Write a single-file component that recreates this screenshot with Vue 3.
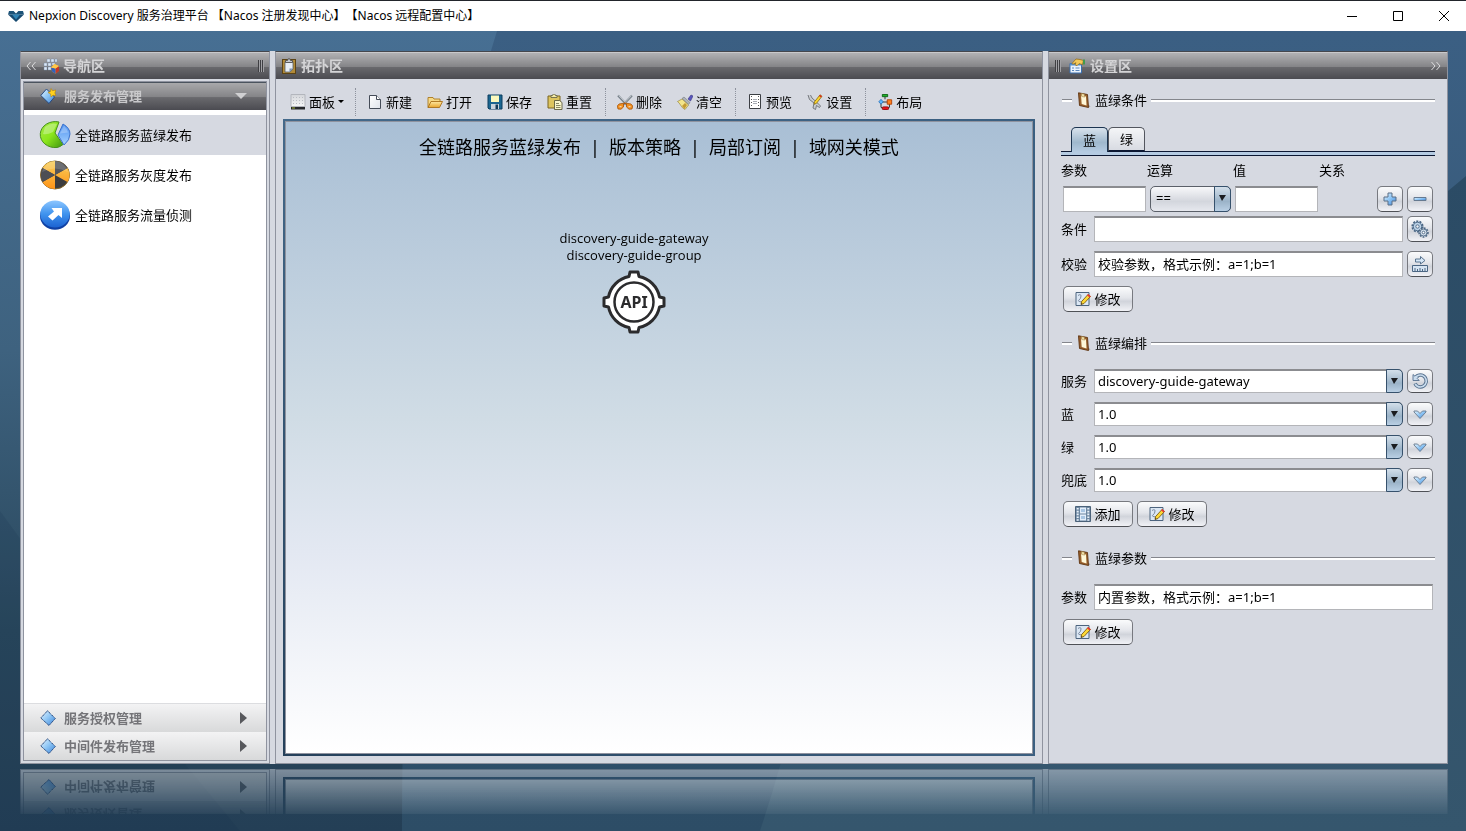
<script setup>
import { ref } from 'vue'

const toolGroups = [
  [{ icon: 'panel', text: '面板', menu: true }],
  [
    { icon: 'new', text: '新建' },
    { icon: 'open', text: '打开' },
    { icon: 'save', text: '保存' },
    { icon: 'paste', text: '重置' },
  ],
  [
    { icon: 'cut', text: '删除' },
    { icon: 'broom', text: '清空' },
  ],
  [
    { icon: 'preview', text: '预览' },
    { icon: 'tools', text: '设置' },
  ],
  [{ icon: 'layout', text: '布局' }],
]

const navItems = [
  { icon: 'pie', text: '全链路服务蓝绿发布' },
  { icon: 'hazard', text: '全链路服务灰度发布' },
  { icon: 'arrow', text: '全链路服务流量侦测' },
]
const activeNav = ref(0)
const closedGroups = ['服务授权管理', '中间件发布管理']

const heading = ['全链路服务蓝绿发布', '版本策略', '局部订阅', '域网关模式']

const tabs = ['蓝', '绿']
const activeTab = ref(0)

const checkText = ref('校验参数，格式示例：a=1;b=1')
const builtinText = ref('内置参数，格式示例：a=1;b=1')
const orchestration = [
  { id: 'service', label: '服务', value: 'discovery-guide-gateway', icon: 'refresh', tip: '刷新' },
  { id: 'blue', label: '蓝', value: '1.0', icon: 'chevron', tip: '选择蓝版本' },
  { id: 'green', label: '绿', value: '1.0', icon: 'chevron', tip: '选择绿版本' },
  { id: 'fallback', label: '兜底', value: '1.0', icon: 'chevron', tip: '选择兜底版本' },
]
</script>

<template>
  <div class="window">
    <svg class="defs" width="0" height="0" aria-hidden="true">
      <defs>
        <linearGradient id="gBlue" x1="0" y1="0" x2="1" y2="1"><stop offset="0" stop-color="#e4f5ff" /><stop offset=".5" stop-color="#8cc4f4" /><stop offset="1" stop-color="#3c82d6" /></linearGradient>
        <linearGradient id="gGreen" x1="0" y1="0" x2="1" y2="1"><stop offset="0" stop-color="#a6e94b" /><stop offset=".5" stop-color="#8be61c" /><stop offset="1" stop-color="#3f9410" /></linearGradient>
        <linearGradient id="gSlice" x1="0" y1="0" x2="0" y2="1"><stop offset="0" stop-color="#4a8ff0" /><stop offset="1" stop-color="#a6d2ff" /></linearGradient>
        <linearGradient id="gOrange" x1="0" y1="0" x2="0" y2="1"><stop offset="0" stop-color="#f7cf5c" /><stop offset="1" stop-color="#ff9417" /></linearGradient>
        <linearGradient id="gBall" x1="0" y1="0" x2="0" y2="1"><stop offset="0" stop-color="#8cc6ff" /><stop offset=".5" stop-color="#3f93ee" /><stop offset="1" stop-color="#1c63d2" /></linearGradient>
        <linearGradient id="gFolder" x1="0" y1="0" x2="0" y2="1"><stop offset="0" stop-color="#ffe9a0" /><stop offset="1" stop-color="#e8a52c" /></linearGradient>
        <linearGradient id="gPage" x1="0" y1="0" x2="1" y2="1"><stop offset="0" stop-color="#fff" /><stop offset="1" stop-color="#dfe3ea" /></linearGradient>
        <linearGradient id="gSheet" x1="0" y1="0" x2="0" y2="1"><stop offset="0" stop-color="#d3d5d9" /><stop offset="1" stop-color="#f6f7f8" /></linearGradient>
        <linearGradient id="gMid" x1="0" y1="0" x2="0" y2="1"><stop offset="0" stop-color="#3b5f83" /><stop offset="1" stop-color="#2d4d66" /></linearGradient>
        <linearGradient id="gEast" x1="0" y1="0" x2="0" y2="1"><stop offset="0" stop-color="#3b5f83" /><stop offset="1" stop-color="#35566d" /></linearGradient>
        <linearGradient id="gShade" x1="0" y1="0" x2="0" y2="1"><stop offset="0" stop-color="#2b4b65" /><stop offset="1" stop-color="#35566d" /></linearGradient>
      </defs>
      <symbol id="i-logo" viewBox="0 0 16 12">
        <path d="M1 1h4.600L8 3.500 10.400 1H15l1 3.500H0z" fill="#1d5378" /><path d="M0 4.500h16L8 12z" fill="#174a70" /><path d="M4 4.500h8L8 9.500z" fill="#2f84b5" />
      </symbol>
      <symbol id="i-navhead" viewBox="0 0 16 16">
        <path d="M4 1h3v3H4zM8 1h3v3H8zM12 1h2v3h-2zM1 5h3v3H1zM5 5h3v3H5zM9 5h3v2H9zM1 9h3v3H1zM5 9h3v3H5z" fill="#dce8f6" stroke="#7189a6" stroke-width=".4" />
        <path d="M8 9.500l3.500-3.500 4 2v5l-3 2.800L9 13.500z" fill="#f0a22a" /><path d="M12.500 10.500l3.500-2.500v5l-3.500 2.800z" fill="#c3382a" /><path d="M8 9.500l4.500 1v5.300L9 13.500z" fill="#2f62bd" /><path d="M8 9.500l3.500-3.500L16 8l-3.500 2.500z" fill="#ffc84a" />
      </symbol>
      <symbol id="i-clipboard" viewBox="0 0 14 16">
        <rect x=".5" y="1.500" width="13" height="14" fill="#b18a38" stroke="#5c4314" /><path d="M3 4h8v7l-3 3H3z" fill="#e8eef6" stroke="#56606d" stroke-width=".8" /><path d="M11 10.500H7.500V14z" fill="#7d92ac" /><path d="M3.500 4.500V2.500h2a1.500 1.800 0 013 0h2v2z" fill="#c3c8d0" stroke="#444" stroke-width=".8" />
      </symbol>
      <symbol id="i-props" viewBox="0 0 16 16">
        <path d="M1 5.500h11.500v9.500H1z" fill="#eaf2fb" stroke="#3b6fae" /><path d="M1 5.500h11.500v2H1z" fill="#4f8fd3" /><path d="M3 10h2M3 12.500h2M6.500 10h4M6.500 12.500h4" stroke="#5b87bd" /><path d="M3 5.500l4-4.500 4 .5 3.500 1-1 4-3.500-.8-2 2-2-1 1-2-3 1.500z" fill="#f3c95a" stroke="#8f6510" stroke-width=".7" /><path d="M14 1.500h2v5h-2z" fill="#439a50" />
      </symbol>
      <symbol id="i-cube" viewBox="0 0 16 16">
        <path d="M7.500 .8L15.300 8.500 9 15.500 .8 8z" fill="url(#gBlue)" stroke="#1f4279" stroke-width="1" stroke-dasharray="1.500 .5" />
      </symbol>
      <symbol id="i-cubestar" viewBox="0 0 16 16">
        <path d="M6.500 1L14.500 9 9 15.500 .8 7.500z" fill="url(#gBlue)" stroke="#1f4279" stroke-width=".9" /><path d="M11 .5l1.500 2.200L16 2l-1.200 3L16 7.500l-3-.3-2 1.800-.4-3L8 4.600l2.600-1.200z" fill="#ffd21e" stroke="#b17b00" stroke-width=".5" />
      </symbol>
      <symbol id="i-pie" viewBox="0 0 32 30">
        <path d="M20 2A15 13 0 1018 27.500q3-.5 6-3L16 13z" fill="url(#gGreen)" stroke="#48901d" /><path d="M6 7q6-5 12-3l-4 8q-6 3-10 2z" fill="#fff" opacity=".3" /><path d="M24 4q7 4 7 10 0 6-6 11l-6-10z" fill="url(#gSlice)" stroke="#3c72cc" /><path d="M25 5.500q3 3 4 7l-8 1z" fill="#fff" opacity=".25" />
      </symbol>
      <symbol id="i-hazard" viewBox="0 0 32 30">
        <ellipse cx="16" cy="15" rx="14.500" ry="14" fill="#3c3c3f" stroke="#8a6a2a" /><path d="M16 15V1A14.500 14 0 003.500 8zM16 15L3.500 22A14.500 14 0 0016 29zM16 15l12.500 7a14 14 0 000-14z" fill="url(#gOrange)" /><path d="M16 1A14.500 14 0 0128.500 8L16 15z" fill="#55565b" /><path d="M2 15q0-4 1.500-7L16 15 3.500 22Q2 19 2 15z" fill="#4c4e54" /><path d="M3 12q13-7 26 0Q26 2 16 1 6 2 3 12z" fill="#fff" opacity=".15" />
      </symbol>
      <symbol id="i-arrow" viewBox="0 0 32 30">
        <ellipse cx="16" cy="16" rx="15" ry="13.800" fill="#1041a4" /><ellipse cx="16" cy="14" rx="14.700" ry="13.500" fill="url(#gBall)" /><path d="M12.500 8H23v10l-3.500-3-6 5.500L9 16.500l6-5z" fill="#fff" />
      </symbol>
      <symbol id="i-panel" viewBox="0 0 16 16">
        <path d="M1 .5h14v12H1z" fill="url(#gSheet)" stroke="#b3b6bd" /><path d="M1 13h14v2.500H1z" fill="#26282b" /><path d="M2 14h3" stroke="#a5b53c" /><path d="M3 3.500h10M3 6.500h10M3 9.500h10" stroke="#b9bcc3" stroke-dasharray="1 2" />
      </symbol>
      <symbol id="i-new" viewBox="0 0 16 16">
        <path d="M2.500 1.500h7l4 4v9h-11z" fill="url(#gPage)" stroke="#444b57" /><path d="M9.500 1.500v4h4" fill="#fff" stroke="#444b57" />
      </symbol>
      <symbol id="i-open" viewBox="0 0 16 16">
        <path d="M1 13.500V3.500h5l1 1.500h6v3" fill="#f6d985" stroke="#a9781f" stroke-width=".9" /><path d="M1 13.500L4 7.500h11.500l-3 6z" fill="url(#gFolder)" stroke="#a9711a" stroke-width=".9" />
      </symbol>
      <symbol id="i-save" viewBox="0 0 16 16">
        <path d="M1 1h14v14H2l-1-1z" fill="#1b6690" stroke="#0d3c5e" /><path d="M4 1.500h8V8H4z" fill="#fbf9bd" /><path d="M4 10h8v5H4z" fill="#c8d4dd" /><path d="M8.500 10.500h2.500V15H8.500z" fill="#123a56" />
      </symbol>
      <symbol id="i-paste" viewBox="0 0 16 16">
        <path d="M1 2h12v12H1z" fill="#ddc45e" stroke="#7b6521" /><path d="M4 3V1.500h1.500a1.500 1.500 0 013 0H10V3.500H4z" fill="#f4eaa6" stroke="#5d5d44" stroke-width=".8" /><path d="M7.500 6.500h5l2.500 2v7H7.500z" fill="#f9f6cc" stroke="#5c5a3c" stroke-width=".9" /><path d="M9 9.500h3M9 11.500h4.500M9 13.500h4.500" stroke="#6b6945" stroke-width=".8" />
      </symbol>
      <symbol id="i-cut" viewBox="0 0 16 16">
        <path d="M1 1.500L10 11M15 1.500L6 11" stroke="#78828b" stroke-width="2" /><path d="M1.500 1.500L10 10M14.500 1.500L8 8.500" stroke="#d5dade" stroke-width=".7" /><path d="M8 9L6.500 10 6.500 13 4 15.200 1 15 .3 12 2 10zM8 9l1.500 1v3L12 15.200l3-.2.700-3L14 10z" fill="#f39121" stroke="#a8540a" stroke-width=".8" /><path d="M2.500 12h2v1.200h-2zM11.500 12h2v1.200h-2z" fill="#e8d3b5" />
      </symbol>
      <symbol id="i-broom" viewBox="0 0 16 16">
        <path d="M11 5l3-4 2 1-2.500 5z" fill="#5a55c0" stroke="#38357d" stroke-width=".6" /><path d="M7 3l6 5.500-1.500 2-6.500-6z" fill="#adb3b9" stroke="#646a70" stroke-width=".5" /><path d="M5 5l6.500 6-3.500 4.500Q5 14 3.500 11 2 8.500.5 7.500z" fill="#f3e58a" stroke="#8b7a36" stroke-width=".6" /><path d="M8 9l2 2-2.500 4L5 12z" fill="#c49a33" />
      </symbol>
      <symbol id="i-preview" viewBox="0 0 16 16">
        <path d="M2.500 .5h11v14h-11z" fill="#fff" stroke="#3c3f44" /><path d="M4.500 2v11M11.500 2v11" stroke="#555" stroke-dasharray="1 2" /><path d="M6 5.500h4M6 7.500h4M6 9.500h4" stroke="#a9adb5" />
      </symbol>
      <symbol id="i-tools" viewBox="0 0 16 16">
        <path d="M1 1l1.500 4.500L7 9l-1 5 2.500 1.500 1-4 3 2 1-1.500-3-3L5 4 3.500 1" fill="#c9ccd0" stroke="#5f6369" stroke-width=".8" /><path d="M13 .8l2 1.500-5.500 7-2.500 1 .5-2.500z" fill="#fbd62e" stroke="#7d5c00" stroke-width=".7" /><path d="M13 .8l2 1.500-1 1.200-2-1.500z" fill="#d52f23" />
      </symbol>
      <symbol id="i-layout" viewBox="0 0 16 18">
        <path d="M8 3v3M4 9h9M3.500 10v5l2 1M13 11v4l-2 1" fill="none" stroke="#222" /><path d="M5 .5h6v2.500H5z" fill="#1fb32a" stroke="#075e0e" /><path d="M3.500 6L6 8.800 3.500 11.500 1 8.800z" fill="#5cb6ff" stroke="#1b66b0" stroke-width=".8" /><path d="M10.500 6.500h5v5h-5z" fill="#ff7f1f" stroke="#b03f00" /><rect x="5" y="14.500" width="7" height="3" rx="1" fill="#e8141a" stroke="#8d0408" />
      </symbol>
      <symbol id="i-board" viewBox="0 0 14 16">
        <path d="M11.500 12.500l2 2-2 1z" fill="#a5a4a3" /><path d="M1.500 .8L10.500 2.500l1 13L2.500 13.500z" fill="#99602c" stroke="#5c3210" stroke-width=".9" /><path d="M4 3.500l5 1 .5 9-4.800-1.500z" fill="#fff8d8" /><path d="M4.300 1.500l3 .6.400 3-3-.6z" fill="#f0dfa8" stroke="#9b7b3c" stroke-width=".5" />
      </symbol>
      <symbol id="i-edit" viewBox="0 0 16 16">
        <path d="M1 1.500h13v13H1z" fill="#dbe7f4" stroke="#4d647e" /><path d="M3 4.500q3-2 3 .5T4 9t3 2" fill="none" stroke="#7b8aa0" /><path d="M13 3.500l2.500 2L9 12.500l-3 1 .6-3z" fill="#fdd835" stroke="#6d4b00" stroke-width=".8" /><path d="M13 3l2.800 2.300-1.200 1.200-2.700-2.200z" fill="#e53935" /><path d="M6 13.500l.4-1.600 1.200 1z" fill="#333" />
      </symbol>
      <symbol id="i-film" viewBox="0 0 16 16">
        <path d="M.5 .5h15v15H.5z" fill="#6d87a1" stroke="#4b6279" /><path d="M5 1.500h6v6H5zM5 8.500h6v6H5z" fill="#e3eefa" /><path d="M2.700 2v13M13.300 2v13" stroke="#eaf2fa" stroke-width="2" stroke-dasharray="1.600 1.200" /><path d="M6 3h4v3H6zM6 10h4v3H6z" fill="#a9c6e3" />
      </symbol>
      <symbol id="i-plus" viewBox="0 0 16 16">
        <path d="M6 2h4v4h4v4h-4v4H6v-4H2V6h4z" fill="url(#gBlue)" stroke="#5a6f86" />
      </symbol>
      <symbol id="i-minus" viewBox="0 0 16 16">
        <path d="M2 6.500h12v3H2z" fill="url(#gBlue)" stroke="#667a90" />
      </symbol>
      <symbol id="i-gears" viewBox="0 0 18 18">
        <g fill="#bcd3e8" stroke="#4b6683" stroke-width=".9"><circle cx="6.500" cy="6.500" r="5.300" stroke-width="1.600" stroke-dasharray="2 1.300" /><circle cx="6.500" cy="6.500" r="4.200" /><circle cx="6.500" cy="6.500" r="1.700" fill="#eef1f5" /><circle cx="12.500" cy="12.500" r="4.500" fill="#dfe6ee" stroke-width="1.500" stroke-dasharray="1.800 1.200" /><circle cx="12.500" cy="12.500" r="3.500" fill="#d3dfeb" /><circle cx="12.500" cy="12.500" r="1.300" fill="#fff" /></g>
      </symbol>
      <symbol id="i-ruler" viewBox="0 0 18 18">
        <path d="M4.500 4h5V1.500L14 5.500 9.500 9V7h-5z" fill="#d6e7f7" stroke="#4b6683" stroke-width=".9" /><path d="M1.500 10.500h15v6h-15z" fill="#d6e4f2" stroke="#4b6683" /><path d="M4 16v-3M6.500 16v-2M9 16v-3M11.500 16v-2M14 16v-3" stroke="#4b6683" />
      </symbol>
      <symbol id="i-refresh" viewBox="0 0 18 18">
        <path d="M5.500 4.300A6 6 0 119.500 15 6 6 0 014 11.500" fill="none" stroke="#56718e" stroke-width="3.400" /><path d="M2 2.500v6h6.200L6.200 6.400 7.500 5 5.200 2.800 4 4.200z" fill="#c9dcee" stroke="#56718e" stroke-width=".9" /><path d="M6 4A6 6 0 119.500 15 6 6 0 014.200 12" fill="none" stroke="#c9dcee" stroke-width="1.600" />
      </symbol>
      <symbol id="i-chevron" viewBox="0 0 16 16">
        <path d="M2 5h3.500L8 7.500 10.500 5H14v1L8 12.500 2 6z" fill="url(#gBlue)" stroke="#66788c" stroke-width=".9" />
      </symbol>
    </svg>

    <header class="titlebar">
      <svg class="logo"><use href="#i-logo" /></svg>
      <h1>Nepxion Discovery 服务治理平台 【Nacos 注册发现中心】【Nacos 远程配置中心】</h1>
      <div class="winctl">
        <button aria-label="最小化"><svg viewBox="0 0 12 12"><path d="M1 6.500h10" /></svg></button>
        <button aria-label="最大化"><svg viewBox="0 0 12 12"><path d="M1.500 1.500h9v9h-9z" /></svg></button>
        <button aria-label="关闭"><svg viewBox="0 0 12 12"><path d="M1 1l10 10M11 1L1 11" /></svg></button>
      </div>
    </header>

    <main class="desktop">
      <svg class="backdrop" viewBox="0 0 1466 800" preserveAspectRatio="none" aria-hidden="true">
        <path d="M185 733L240 800H0V480z" fill="#17304a" opacity=".15" />
        <path d="M497 0H1466V800H402Q402 300 497 0z" fill="url(#gMid)" />
        <path d="M880 0H1466V800H760Q860 500 880 0z" fill="url(#gEast)" />
        <path d="M1466 145L1400 200V800H1466z" fill="url(#gShade)" />
      </svg>

      <div class="panels">
        <section class="panel nav">
          <div class="head">
            <svg class="dbl" viewBox="0 0 10 8"><path d="M4.500 0L1 4l3.500 4M9.500 0L6 4l3.500 4" /></svg>
            <svg class="i16"><use href="#i-navhead" /></svg>
            <h2>导航区</h2>
            <span class="grip"></span>
          </div>
          <div class="accordion">
            <button class="group open">
              <svg class="i16"><use href="#i-cubestar" /></svg>服务发布管理
              <svg class="down" viewBox="0 0 12 6"><path d="M0 0h12L6 6z" /></svg>
            </button>
            <ul>
              <li v-for="(n, i) in navItems" :key="n.icon">
                <button :class="{ active: i === activeNav }" @click="activeNav = i">
                  <svg><use :href="'#i-' + n.icon" /></svg>{{ n.text }}
                </button>
              </li>
            </ul>
            <button v-for="g in closedGroups" :key="g" class="group">
              <svg class="i16"><use href="#i-cube" /></svg>{{ g }}
              <svg class="right" viewBox="0 0 7 12"><path d="M0 0l7 6-7 6z" /></svg>
            </button>
          </div>
        </section>

        <section class="panel topo">
          <div class="head">
            <svg class="i16"><use href="#i-clipboard" /></svg>
            <h2>拓扑区</h2>
          </div>
          <div class="toolbar">
            <div v-for="(g, gi) in toolGroups" :key="gi" class="tools">
              <button v-for="t in g" :key="t.text">
                <svg><use :href="'#i-' + t.icon" /></svg>{{ t.text }}<i v-if="t.menu" class="caret"></i>
              </button>
            </div>
          </div>
          <div class="frame">
            <div class="canvas">
              <div class="heading">
                <template v-for="(h, i) in heading" :key="h"><span v-if="i">|</span><span>{{ h }}</span></template>
              </div>
              <div class="node">
                <span>discovery-guide-gateway</span>
                <span>discovery-guide-group</span>
                <svg viewBox="0 0 64 64">
                  <path d="M27 6.500L28 2h8l1 4.500A26 26 0 0157.500 27L62 28v8l-4.500 1A26 26 0 0137 57.500L36 62h-8l-1-4.500A26 26 0 016.500 37L2 36v-8l4.500-1A26 26 0 0127 6.500z" fill="#fff" stroke="#2b2b2d" stroke-width="3" stroke-linejoin="round" />
                  <circle cx="32" cy="32" r="19.500" fill="#fff" stroke="#2b2b2d" stroke-width="2.500" />
                  <text x="32" y="38" text-anchor="middle">API</text>
                </svg>
              </div>
            </div>
          </div>
        </section>

        <section class="panel settings">
          <div class="head">
            <span class="grip"></span>
            <svg class="i16"><use href="#i-props" /></svg>
            <h2>设置区</h2>
            <svg class="dbl end" viewBox="0 0 10 8"><path d="M.5 0L4 4 .5 8M5.500 0L9 4 5.500 8" /></svg>
          </div>
          <form class="form" @submit.prevent>
            <h3><svg><use href="#i-board" /></svg>蓝绿条件</h3>
            <div class="tabs">
              <button v-for="(t, i) in tabs" :key="t" type="button" :class="{ on: i === activeTab }" @click="activeTab = i">{{ t }}</button>
            </div>
            <div class="cols labels">
              <label for="p-name">参数</label><label for="p-op">运算</label><label for="p-val">值</label><span>关系</span>
            </div>
            <div class="cols">
              <input id="p-name" type="text" />
              <span class="combo plain"><select id="p-op"><option>==</option></select><i></i></span>
              <input id="p-val" type="text" />
              <span class="pair">
                <button type="button" class="btn sq" aria-label="添加条件"><svg><use href="#i-plus" /></svg></button>
                <button type="button" class="btn sq" aria-label="删除条件"><svg><use href="#i-minus" /></svg></button>
              </span>
            </div>
            <div class="row first">
              <label for="cond">条件</label><input id="cond" type="text" />
              <button type="button" class="btn sq" aria-label="生成条件"><svg class="i18"><use href="#i-gears" /></svg></button>
            </div>
            <div class="row check">
              <label for="check">校验</label><input id="check" v-model="checkText" type="text" />
              <button type="button" class="btn sq" aria-label="校验条件"><svg class="i18"><use href="#i-ruler" /></svg></button>
            </div>
            <div class="actions">
              <button type="button" class="btn"><svg><use href="#i-edit" /></svg>修改</button>
            </div>

            <h3><svg><use href="#i-board" /></svg>蓝绿编排</h3>
            <div class="stack">
              <div v-for="o in orchestration" :key="o.id" class="row">
                <label :for="o.id">{{ o.label }}</label>
                <span class="combo"><select :id="o.id"><option>{{ o.value }}</option></select><i></i></span>
                <button type="button" class="btn sq" :aria-label="o.tip"><svg :class="{ i18: o.icon === 'refresh' }"><use :href="'#i-' + o.icon" /></svg></button>
              </div>
            </div>
            <div class="actions">
              <button type="button" class="btn"><svg><use href="#i-film" /></svg>添加</button>
              <button type="button" class="btn"><svg><use href="#i-edit" /></svg>修改</button>
            </div>

            <h3><svg><use href="#i-board" /></svg>蓝绿参数</h3>
            <div class="row wide">
              <label for="builtin">参数</label><input id="builtin" v-model="builtinText" type="text" />
            </div>
            <div class="actions">
              <button type="button" class="btn"><svg><use href="#i-edit" /></svg>修改</button>
            </div>
          </form>
        </section>
      </div>
    </main>
  </div>
</template>

<style>
body {
  margin: 0;
}
</style>

<style scoped>
* {
  box-sizing: border-box;
}
.window {
  min-height: 100vh;
  display: flex;
  flex-direction: column;
  font: 13px/16px "Noto Sans", "Noto Sans CJK SC", sans-serif;
  color: #000;
}
.defs {
  position: absolute;
}
button,
input,
select {
  font: inherit;
  color: inherit;
  margin: 0;
}
button {
  border: 0;
  padding: 0;
  background: none;
}
h1,
h2,
h3,
ul {
  margin: 0;
  padding: 0;
  list-style: none;
}
svg {
  flex: none;
  width: 16px;
  height: 16px;
}

.titlebar {
  height: 31px;
  flex: none;
  display: flex;
  align-items: center;
  padding-left: 8px;
  border-top: 1px solid #22252b;
  background: #fff;
}
.titlebar .logo {
  height: 12px;
}
.titlebar h1 {
  margin-left: 5px;
  font: 12px/16px "Noto Sans", "Noto Sans CJK SC", sans-serif;
  text-spacing-trim: space-all;
}
.winctl {
  margin-left: auto;
  display: flex;
  gap: 2px;
}
.winctl button {
  width: 44px;
  height: 30px;
  display: grid;
  place-items: center;
}
.winctl svg {
  width: 12px;
  height: 12px;
  fill: none;
  stroke: #000;
}

.desktop {
  position: relative;
  flex: 1;
  display: flex;
  padding: 20px 18px 67px 20px;
  overflow: hidden;
  background: linear-gradient(#476f93, #3e627f 40%, #2a485d 75%, #243f56);
}
.backdrop {
  position: absolute;
  inset: 0;
  width: 100%;
  height: 100%;
}
.panels {
  position: relative;
  flex: 1;
  display: flex;
  gap: 5px;
  background: #d6d9e1;
  -webkit-box-reflect: below 5px linear-gradient(transparent calc(100% - 45px), rgba(0, 0, 0, 0.06) calc(100% - 45px), rgba(0, 0, 0, 0.5));
}
.panel {
  display: flex;
  flex-direction: column;
  border: 1px solid #8f939f;
  border-top-color: #45474d;
}
.nav {
  flex: 0 0 250px;
}
.topo {
  flex: 1;
  min-width: 0;
}
.settings {
  flex: 0 0 400px;
}
.head {
  height: 27px;
  flex: none;
  display: flex;
  align-items: center;
  padding: 0 5px;
  border-top: 1px solid #c9c9cb;
  background: linear-gradient(#b1b1b3, #858588 52%, #69696d 54%, #4b4b51);
  color: #d4d4d6;
}
.head h2 {
  font-size: 14px;
  line-height: 20px;
  font-weight: 700;
  margin-left: 4px;
}
.head .dbl {
  width: 10px;
  height: 8px;
  margin-right: 7px;
  fill: none;
  stroke: #dcdcde;
}
.head .dbl.end {
  margin: 0 1px 0 auto;
}
.grip {
  width: 6px;
  height: 12px;
  background: repeating-linear-gradient(90deg, #3f3f43 0 1px, #a1a1a5 1px 2px);
}
.nav .grip {
  margin-left: auto;
}
.settings .grip {
  margin: 0 8px 0 1px;
}
.settings .head h2 {
  margin-left: 5px;
}

.accordion {
  flex: 1;
  display: flex;
  flex-direction: column;
  margin: 2px;
  border: 1px solid #8f939f;
  background: #fff;
}
.group {
  height: 28px;
  flex: none;
  display: flex;
  align-items: center;
  gap: 8px;
  padding: 0 19px 0 16px;
  background: linear-gradient(#f3f3f4, #d8d9da);
  color: #747478;
  font-weight: 700;
}
.group.open {
  padding-bottom: 2px;
  background: linear-gradient(#a9a9ab, #858588 50%, #69696d 54%, #4b4b51);
  border-top: 1px solid #4b545e;
  color: #c9c9cb;
}
.group .down {
  width: 12px;
  height: 6px;
  margin-left: auto;
  fill: #d0d0d2;
}
.group .right {
  width: 7px;
  height: 12px;
  margin-left: auto;
  fill: #57585c;
}
.accordion ul {
  flex: 1;
  padding-top: 5px;
  border-bottom: 1px solid #dcdde0;
}
.accordion li button {
  width: 100%;
  height: 40px;
  display: flex;
  align-items: center;
  gap: 4px;
  padding-left: 15px;
}
.accordion li .active {
  background: #d6d9e1;
}
.accordion li svg {
  width: 32px;
  height: 30px;
}

.toolbar {
  height: 40px;
  flex: none;
  display: flex;
  align-items: center;
  padding-top: 5px;
}
.tools {
  height: 28px;
  display: flex;
  align-items: center;
  gap: 15px;
  padding: 0 13px 0 11px;
}
.tools + .tools {
  border-left: 1px dotted #8d929d;
}
.tools:first-child {
  padding: 0 11px 0 14px;
}
.tools button {
  display: flex;
  align-items: center;
  gap: 3px;
}
.caret {
  border: 3px solid transparent;
  border-top-color: #000;
  border-bottom: 0;
}
.frame {
  flex: 1;
  display: flex;
  margin: 0 7px;
  margin-bottom: 7px;
  padding: 2px;
  background: linear-gradient(90deg, transparent, #3b5f80), linear-gradient(#44698a, #24405a);
}
.canvas {
  flex: 1;
  border: 1px solid #8f939f;
  background: linear-gradient(#a9bfd5, #d0dce5 47%, #e3e8f2 68%, #fff);
  text-align: center;
}
.heading {
  display: flex;
  justify-content: center;
  gap: 9px;
  margin-top: 13px;
  font-size: 18px;
  line-height: 24px;
}
.node {
  display: flex;
  flex-direction: column;
  align-items: center;
  padding-right: 50px;
  margin-top: 71px;
  font-family: "Open Sans", "Noto Sans CJK SC", sans-serif;
  line-height: 17px;
}
.node svg {
  width: 64px;
  height: 64px;
  margin-top: 6px;
}
.node text {
  font: 700 16px "Noto Sans", sans-serif;
  fill: #2b2b2d;
}

.form {
  padding: 13px 12px 0 12px;
}
h3 {
  display: flex;
  align-items: center;
  height: 16px;
  gap: 4px;
  font-size: 13px;
  font-weight: 400;
}
h3 svg {
  width: 14px;
  margin-left: 1px;
}
h3::before,
h3::after {
  content: "";
  height: 2px;
  border-top: 1px solid #84868c;
  background: #fff;
}
h3::before {
  width: 10px;
  margin-left: 1px;
}
h3::after {
  flex: 1;
}
.tabs {
  display: flex;
  align-items: flex-end;
  height: 48px;
  padding-left: 10px;
  border-bottom: 1px solid #0c1732;
  background: linear-gradient(#0c1732, #0c1732) 0 43px / 100% 1px no-repeat, linear-gradient(#b5cbe2, #b5cbe2) 0 44px / 100% 3px no-repeat;
}
.tabs button {
  width: 37px;
  height: 24px;
  margin-bottom: 4px;
  border: 1px solid #53565e;
  border-bottom-color: #0c1732;
  border-radius: 5px 5px 0 0;
  background: linear-gradient(#f4f5f7, #d8dbe2);
}
.tabs button.on {
  height: 25px;
  margin-bottom: 3px;
  border-color: #1c3450;
  border-bottom: 0;
  background: linear-gradient(#d8e2ec, #9fb8cd 60%, #b5cbe2);
}
.cols {
  display: grid;
  grid-template-columns: 83px 81px 83px 1fr;
  column-gap: 4px;
  padding: 0 2px;
  align-items: center;
}
.cols.labels {
  grid-template-columns: 82px 82px 82px 1fr;
  padding: 6px 0 8px;
}
.row {
  display: grid;
  grid-template-columns: 29px 1fr 26px;
  column-gap: 4px;
  align-items: center;
  padding-right: 2px;
}
.row.wide {
  grid-template-columns: 29px 1fr;
  margin-top: 18px;
}
.row.first {
  margin-top: 4px;
}
.row.check {
  margin-top: 9px;
}
.pair {
  display: flex;
  gap: 4px;
  justify-content: flex-end;
}
input {
  width: 100%;
  height: 26px;
  padding: 0 3px 2px;
  border: 1px solid #b4b5b9;
  border-top: 2px solid #8b8c90;
  border-radius: 0;
  background: #fff;
  outline: 0;
}
.combo {
  position: relative;
  display: flex;
  height: 24px;
}
.combo select {
  width: 100%;
  appearance: none;
  padding: 0 20px 2px 3px;
  border: 1px solid #b4b5b9;
  border-top: 2px solid #8b8c90;
  border-radius: 0 5px 5px 0;
  background: #fff;
  outline: 0;
}
.combo i {
  position: absolute;
  inset: 0 0 0 auto;
  width: 17px;
  border: 1px solid #36516c;
  border-radius: 0 5px 5px 0;
  background: linear-gradient(#d3dfea, #9bb3c8 60%, #b9cfe4);
  pointer-events: none;
}
.combo i::after {
  content: "";
  position: absolute;
  left: 4px;
  top: 8px;
  border: 4px solid transparent;
  border-top: 6px solid #1a1c20;
  border-bottom: 0;
  border-left-width: 3px;
}
.combo.plain {
  height: 26px;
}
.plain select {
  padding-left: 5px;
  border: 1px solid #5b6069;
  border-radius: 5px;
  background: linear-gradient(#f7f8fa, #d3d6dd 60%, #e6e8ee);
}
.btn {
  height: 26px;
  width: 70px;
  display: flex;
  align-items: center;
  justify-content: center;
  gap: 3px;
  border: 1px solid #77797f;
  border-bottom-color: #4f5156;
  border-radius: 5px;
  background: linear-gradient(#fafbfc, #e3e5ea 45%, #d1d4db 60%, #f1f2f6);
}
.btn.sq {
  width: 26px;
}
.stack .sq {
  height: 24px;
}
.i18 {
  width: 18px;
  height: 18px;
}
.actions {
  display: flex;
  gap: 4px;
  padding: 9px 2px 0;
  margin-bottom: 23px;
}
.stack {
  display: grid;
  gap: 9px;
  margin-top: 18px;
}
</style>
